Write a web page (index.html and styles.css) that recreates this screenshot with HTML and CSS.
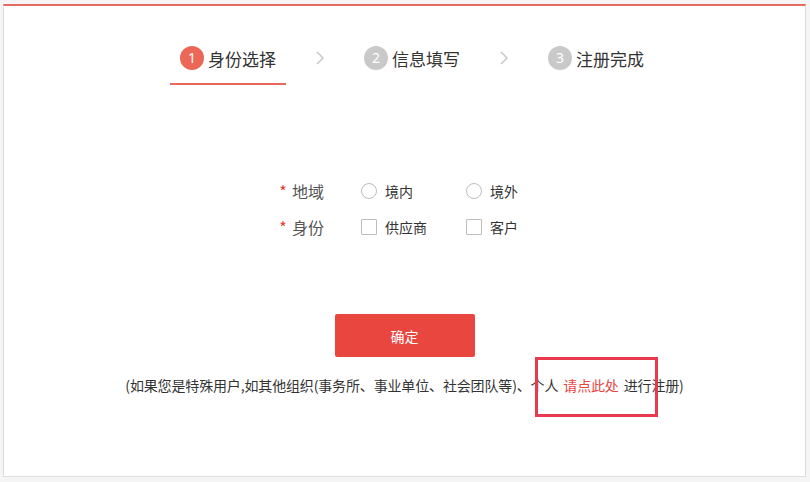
FILE: index.html
```html
<!DOCTYPE html>
<html lang="zh">
<head>
<meta charset="utf-8">
<link rel="stylesheet" href="styles.css">
</head>
<body>
<div class="card">
  <div class="steps">
    <div class="step active"><span class="num">1</span><span class="txt">身份选择</span></div>
    <span class="chev"><svg width="8" height="14" viewBox="0 0 8 14"><path d="M1 1 L7 7 L1 13" fill="none" stroke="#c4c4c4" stroke-width="1.4"/></svg></span>
    <div class="step"><span class="num">2</span><span class="txt">信息填写</span></div>
    <span class="chev"><svg width="8" height="14" viewBox="0 0 8 14"><path d="M1 1 L7 7 L1 13" fill="none" stroke="#c4c4c4" stroke-width="1.4"/></svg></span>
    <div class="step"><span class="num">3</span><span class="txt">注册完成</span></div>
  </div>

  <div class="form">
    <div class="row">
      <span class="label"><i class="star">*</i>地域</span>
      <label class="opt"><span class="radio"></span>境内</label>
      <label class="opt"><span class="radio"></span>境外</label>
    </div>
    <div class="row">
      <span class="label"><i class="star">*</i>身份</span>
      <label class="opt"><span class="check"></span>供应商</label>
      <label class="opt"><span class="check"></span>客户</label>
    </div>
  </div>

  <div class="actions">
    <button class="btn">确定</button>
  </div>
  <p class="note">(如果您是特殊用户,如其他组织(事务所、事业单位、社会团队等)、个人 <a class="link">请点此处</a> 进行注册)</p>
  <div class="mark"></div>
</div>
</body>
</html>
```

FILE: styles.css
```css
* { box-sizing: border-box; }
html, body { margin: 0; padding: 0; }
body {
  background: #f5f5f5;
  font-family: "Noto Sans CJK SC", "Noto Sans", sans-serif;
  color: #333;
}
.card {
  position: relative;
  margin: 4px 4px 0 3px;
  height: 473px;
  background: #fff;
  border: 1px solid #dcdcdc;
  border-top: 2px solid #e56b60;
}
.steps {
  display: flex;
  align-items: center;
  padding: 28px 0 0 166px;
}
.step {
  display: flex;
  align-items: center;
  gap: 4px;
  padding: 0 10px 1px;
  height: 51px;
  border-bottom: 2px solid transparent;
}
.step.active { border-bottom-color: #e8695c; }
.num {
  width: 24px;
  height: 24px;
  border-radius: 50%;
  background: #c9c9c9;
  color: #fff;
  font-size: 14px;
  line-height: 24px;
  text-align: center;
  font-family: "Noto Sans", sans-serif;
}
.step.active .num { background: #ec6757; }
.txt {
  font-size: 17px;
  color: #333;
}
.chev {
  display: flex;
  align-items: center;
  margin: 0 30px 0 30px;
  height: 51px;
  padding-bottom: 3px;
}
.form {
  padding: 88px 0 0 273px;
}
.row {
  display: flex;
  align-items: center;
  height: 36px;
}
.label {
  width: 84px;
  font-size: 16px;
  color: #555;
  display: flex;
  align-items: center;
}
.star {
  font-style: normal;
  color: #e33b2f;
  font-size: 16px;
  width: 12px;
  text-align: center;
  margin-right: 3px;
}
.opt {
  display: flex;
  align-items: center;
  width: 105px;
  font-size: 14px;
  color: #333;
}
.radio {
  width: 16px;
  height: 16px;
  border: 1px solid #bdbdbd;
  border-radius: 50%;
  margin-right: 8px;
}
.check {
  width: 16px;
  height: 16px;
  border: 1px solid #bdbdbd;
  border-radius: 1px;
  margin-right: 8px;
}
.actions {
  display: flex;
  justify-content: center;
  padding-top: 69px;
}
.btn {
  width: 140px;
  height: 43px;
  background: #e8463f;
  border: none;
  border-radius: 2px;
  color: #fff;
  font-size: 14px;
  font-family: "Noto Sans CJK SC", sans-serif;
}
.note {
  margin: 18px 0 0;
  text-align: center;
  font-size: 14px;
  letter-spacing: -0.15px;
  word-spacing: 2px;
  color: #333;
}
.link { color: #e8463f; }
.mark {
  position: absolute;
  left: 531px;
  top: 351px;
  width: 123px;
  height: 60px;
  border: 3px solid #e83a4c;
}
```
